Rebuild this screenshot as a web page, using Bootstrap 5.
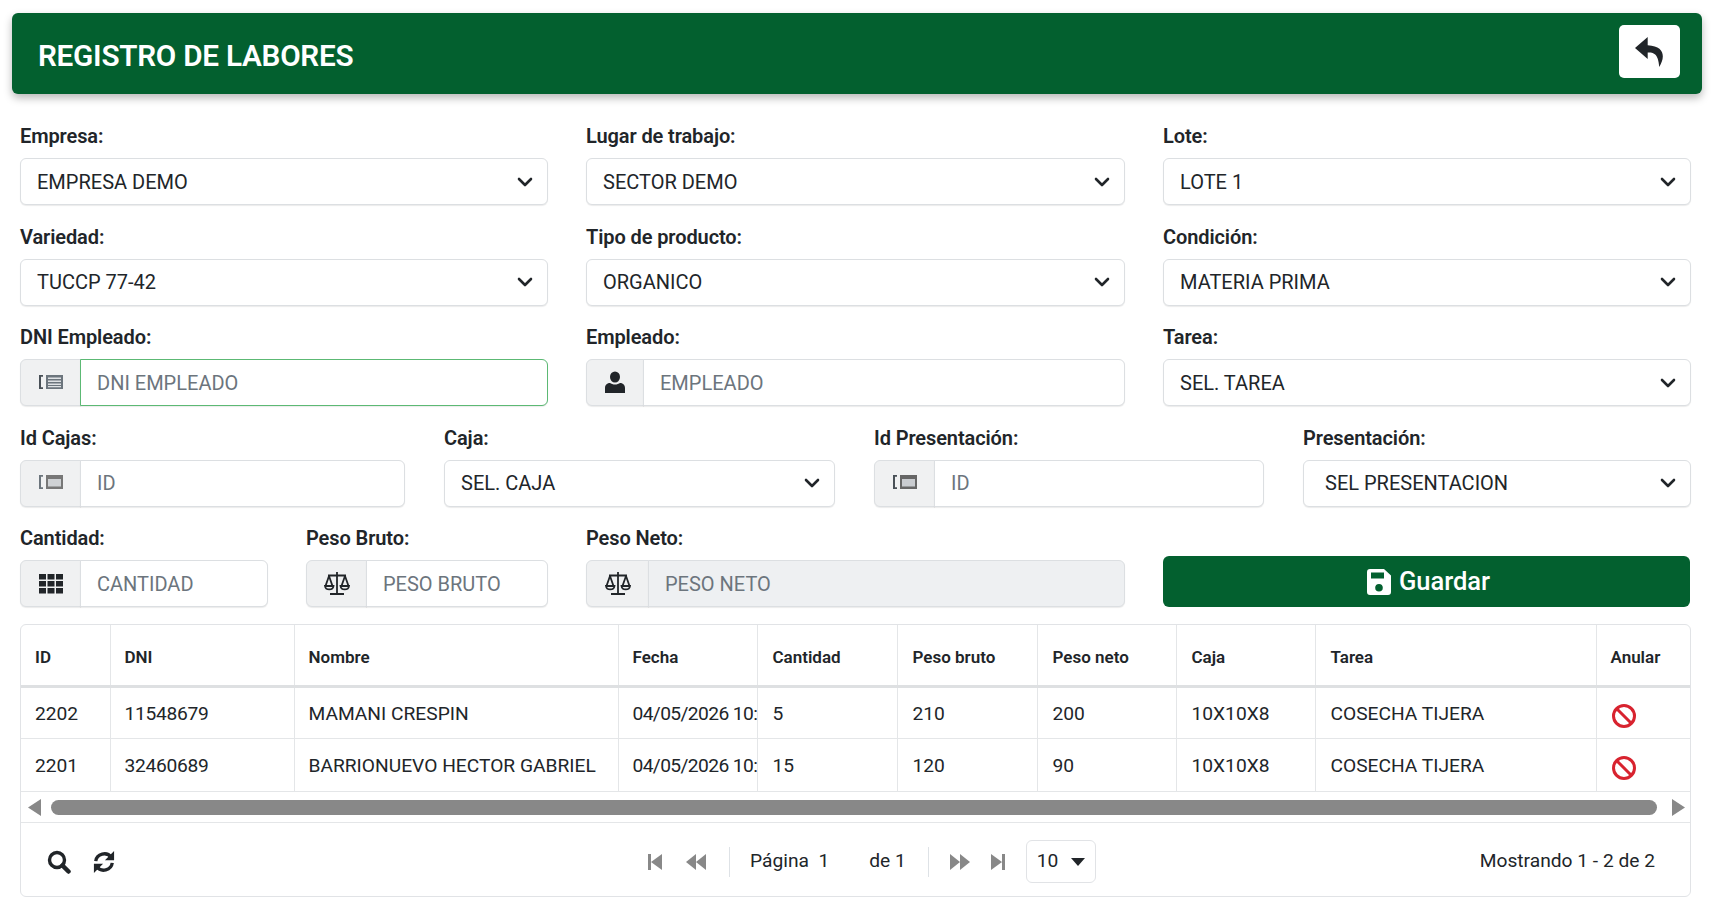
<!DOCTYPE html>
<html lang="es">
<head>
<meta charset="utf-8">
<title>Registro de labores</title>
<link href="https://cdn.jsdelivr.net/npm/bootstrap@5.3.0/dist/css/bootstrap.min.css" rel="stylesheet">
<style>
html,body{height:917px;overflow:hidden;background:#fff}
body{font-family:Roboto,"Liberation Sans",sans-serif;color:#212529;font-size:20px}
.page-wrap{padding:13px 14px 0 12px}
.top-bar{height:81px;background:#03602f;border-radius:6px;box-shadow:0 4px 8px rgba(0,0,0,.28);padding:12px 22px 16px 26px}
.top-title{font-size:29.7px;font-weight:600;color:#fff;margin:8px 0 0;line-height:1;letter-spacing:-.25px}
.back-btn{width:61px;height:53px;background:#fff;border-radius:5px;border:0;padding:0}
.form-area{padding:28px 11px 0 8px}
.f-row{display:grid;column-gap:38px;margin-bottom:17.6px}
.r3{grid-template-columns:528px 539px 1fr}
.r4{grid-template-columns:385px 391px 390px 1fr;column-gap:39px}
.r5{grid-template-columns:248px 242px 539px 1fr;margin-bottom:17px}
.f-label{display:block;font-size:20px;font-weight:600;line-height:29px;margin-bottom:7px;letter-spacing:-.1px}
.form-select,.form-control{height:47px;font-size:20px;color:#212529;border-color:#dcdfe2;border-radius:6px;box-shadow:0 1px 1px rgba(0,0,0,.08);padding-left:16px}
.form-select{background-size:20px 16px;background-position:right 12px center;background-image:url("data:image/svg+xml,%3csvg xmlns='http://www.w3.org/2000/svg' viewBox='0 0 16 16'%3e%3cpath fill='none' stroke='%23212529' stroke-linecap='round' stroke-linejoin='round' stroke-width='2.6' d='m2 5 6 6 6-6'/%3e%3c/svg%3e")}
.form-select.ps-sel{padding-left:21px}
.form-control::placeholder{color:#6c757d;opacity:1}
.form-control:disabled{background:#eef0f2}
.form-control.is-focus{border-color:#5cb974;border-width:1.5px}
.input-group-text{width:61px;height:47px;justify-content:center;background:#f0f1f2;border-color:#dcdfe2;border-radius:6px;padding:0;box-shadow:0 1px 1px rgba(0,0,0,.08)}
.input-group-text.ig-narrow{width:58px}
.input-group-text.ig-wide{width:63px}
.save-btn{height:51px;width:527px;padding:0 0 0 4px;background:#03602f;color:#fff;border:0;border-radius:6px;font-size:25.5px;font-weight:500;line-height:1;display:flex;align-items:center;justify-content:center;gap:8px;align-self:end}
.save-btn:hover{background:#03602f;color:#fff}
.grid-box{width:1671px;height:273px;border:1px solid #e1e3e6;border-radius:6px;overflow:hidden;background:#fff}
.tbl-area{height:167px;overflow:hidden}
.lab-table{width:1670px;table-layout:fixed;border-collapse:collapse;margin:0;font-size:19.2px}
.lab-table th,.lab-table td{border-right:1px solid #e4e6e8;padding:2px 0 0 14px;white-space:nowrap;overflow:hidden;vertical-align:middle}
.lab-table th:nth-child(n+5):nth-child(-n+9),.lab-table td:nth-child(n+5):nth-child(-n+9){padding-left:15px}
.lab-table th:last-child,.lab-table td:last-child{border-right:0}
.lab-table th{height:61px;padding-top:5px;font-size:17px;font-weight:600;border-bottom:3px solid #dee0e2}
.lab-table td{height:52.5px;border-bottom:1px solid #e4e6e8}
.lab-table tr.stub td{height:4px;border-bottom:0;padding:0}
.lab-table td.num-tight{letter-spacing:-.3px}
.lab-table td.date-cell{letter-spacing:-.6px}
.scroll-rail{height:31px;border-bottom:1px solid #e4e6e8;padding:0 5px 0 7px;gap:10px}
.scroll-thumb{flex:1;height:15px;background:#888;border-radius:8px;margin-right:5px}
.pager-bar{height:73px;padding:4px 35px 0 26px;font-size:19.2px}
.pager-left{width:600px;gap:22px}
.pg-first{margin-right:22px}
.pg-last{margin-left:19px}
.pg-of{margin-left:40px}
.pg-sep{width:1px;height:30px;background:#dee2e6;margin:0 20px 0 22px}
.pg-size{width:70px;height:43px;border:1px solid #e1e3e6;border-radius:6px;padding:0 10px;margin-left:20px;justify-content:space-between}
.pg-caret{width:0;height:0;border:7px solid transparent;border-top:8px solid #212529;border-bottom:0}
</style>
</head>
<body>
<div class="page-wrap">
  <div class="top-bar d-flex justify-content-between align-items-center">
    <h1 class="top-title">REGISTRO DE LABORES</h1>
    <button class="back-btn d-flex align-items-center justify-content-center" aria-label="Volver">
      <svg width="30" height="30" viewBox="0 0 26 26"><path fill="#212529" d="M11 0 0 9.500 11 19v-5.500c5 0 9 .5 10 12.500 5-8 5.500-18-10-18.800z"/></svg>
    </button>
  </div>

  <div class="form-area">
    <div class="f-row r3">
      <div><label class="f-label">Empresa:</label><select class="form-select"><option>EMPRESA DEMO</option></select></div>
      <div><label class="f-label">Lugar de trabajo:</label><select class="form-select"><option>SECTOR DEMO</option></select></div>
      <div><label class="f-label">Lote:</label><select class="form-select"><option>LOTE 1</option></select></div>
    </div>
    <div class="f-row r3">
      <div><label class="f-label">Variedad:</label><select class="form-select"><option>TUCCP 77-42</option></select></div>
      <div><label class="f-label">Tipo de producto:</label><select class="form-select"><option>ORGANICO</option></select></div>
      <div><label class="f-label">Condición:</label><select class="form-select"><option>MATERIA PRIMA</option></select></div>
    </div>
    <div class="f-row r3">
      <div><label class="f-label">DNI Empleado:</label>
        <div class="input-group"><span class="input-group-text"><svg width="26" height="20" viewBox="0 0 26 20"><path fill="#495057" d="M1 2h4v1.800H3v10.400h2V16H1z"/><path fill="#6c757d" d="M8 2h17v14H8z"/><path fill="#dfe2e5" d="M10 4.500h13V6H10zM10 7.500h13V9H10zM10 10.500h13V12H10zM10 13h13v1.200H10z"/></svg></span>
        <input class="form-control is-focus" placeholder="DNI EMPLEADO"></div></div>
      <div><label class="f-label">Empleado:</label>
        <div class="input-group"><span class="input-group-text ig-narrow"><svg width="20" height="24" viewBox="0 0 20 24"><ellipse cx="10" cy="6" rx="5" ry="5.500" fill="#212529"/><path fill="#212529" d="M0 22v-5c0-3.500 2.500-5 5-5 1 .800 3.200 1.500 5 1.500s4-.700 5-1.500c2.500 0 5 1.500 5 5v5z"/></svg></span>
        <input class="form-control" placeholder="EMPLEADO"></div></div>
      <div><label class="f-label">Tarea:</label><select class="form-select"><option>SEL. TAREA</option></select></div>
    </div>
    <div class="f-row r4">
      <div><label class="f-label">Id Cajas:</label>
        <div class="input-group"><span class="input-group-text"><svg width="26" height="20" viewBox="0 0 26 20"><path fill="#6c757d" d="M1 2h4v1.800H3v10.400h2V16H1z"/><path fill="#777" d="M8 2h17v14H8z"/><path fill="#cfd2d5" d="M10 6h13v7.500H10z"/></svg></span>
        <input class="form-control" placeholder="ID"></div></div>
      <div><label class="f-label">Caja:</label><select class="form-select"><option>SEL. CAJA</option></select></div>
      <div><label class="f-label">Id Presentación:</label>
        <div class="input-group"><span class="input-group-text"><svg width="26" height="20" viewBox="0 0 26 20"><path fill="#495057" d="M1 2h4v1.800H3v10.400h2V16H1z"/><path fill="#666" d="M8 2h17v14H8z"/><path fill="#c9ccd0" d="M10 6h13v7.500H10z"/></svg></span>
        <input class="form-control" placeholder="ID"></div></div>
      <div><label class="f-label">Presentación:</label><select class="form-select ps-sel"><option>SEL PRESENTACION</option></select></div>
    </div>
    <div class="f-row r5">
      <div><label class="f-label">Cantidad:</label>
        <div class="input-group"><span class="input-group-text"><svg width="24" height="20" viewBox="0 0 24 20"><path fill="#212529" d="M0 0h7v5.500H0zM8.500 0h7v5.500h-7zM17 0h7v5.500h-7zM0 7h7v5.500H0zM8.500 7h7v5.500h-7zM17 7h7v5.500h-7zM0 14h7v5.500H0zM8.500 14h7v5.500h-7zM17 14h7v5.500h-7z"/></svg></span>
        <input class="form-control" placeholder="CANTIDAD"></div></div>
      <div><label class="f-label">Peso Bruto:</label>
        <div class="input-group"><span class="input-group-text"><svg width="26" height="24" viewBox="0 0 26 24"><g fill="none" stroke="#212529" stroke-width="1.800"><path d="M13 0v21M6 22h14M4 3.500h18M5 4 1.500 14M5 4l3.500 10M21 4l-3.500 10M21 4l3.500 10"/><path d="M1 14c.5 4.500 8 4.500 8.500 0zM16.500 14c.5 4.500 8 4.500 8.500 0z"/></g></svg></span>
        <input class="form-control" placeholder="PESO BRUTO"></div></div>
      <div><label class="f-label">Peso Neto:</label>
        <div class="input-group"><span class="input-group-text ig-wide"><svg width="26" height="24" viewBox="0 0 26 24"><g fill="none" stroke="#212529" stroke-width="1.800"><path d="M13 0v21M6 22h14M4 3.500h18M5 4 1.500 14M5 4l3.500 10M21 4l-3.500 10M21 4l3.500 10"/><path d="M1 14c.5 4.500 8 4.500 8.500 0zM16.500 14c.5 4.500 8 4.500 8.500 0z"/></g></svg></span>
        <input class="form-control" placeholder="PESO NETO" disabled></div></div>
      <button class="btn save-btn"><svg width="24" height="26" viewBox="0 0 24 26"><path fill="#fff" fill-rule="evenodd" d="M3 0h14l7 6.500V23a3 3 0 0 1-3 3H3a3 3 0 0 1-3-3V3a3 3 0 0 1 3-3zm1 3.500v6h13v-6zM12 15a3.800 3.800 0 1 0 0 7.600 3.800 3.800 0 0 0 0-7.600z"/></svg>Guardar</button>
    </div>

    <div class="grid-box">
      <div class="tbl-area">
        <table class="lab-table">
          <colgroup><col style="width:89px"><col style="width:184px"><col style="width:324px"><col style="width:139px"><col style="width:140px"><col style="width:140px"><col style="width:139px"><col style="width:139px"><col style="width:281px"><col></colgroup>
          <thead><tr><th>ID</th><th>DNI</th><th>Nombre</th><th>Fecha</th><th>Cantidad</th><th>Peso bruto</th><th>Peso neto</th><th>Caja</th><th>Tarea</th><th>Anular</th></tr></thead>
          <tbody>
            <tr><td>2202</td><td class="num-tight">11548679</td><td>MAMANI CRESPIN</td><td class="date-cell">04/05/2026 10:</td><td>5</td><td>210</td><td>200</td><td>10X10X8</td><td>COSECHA TIJERA</td><td><svg width="26" height="26" viewBox="0 0 26 26"><circle cx="13" cy="14" r="10.500" fill="none" stroke="#d8232f" stroke-width="3"/><path stroke="#d8232f" stroke-width="3" d="m6 7 14 14"/></svg></td></tr>
            <tr><td>2201</td><td class="num-tight">32460689</td><td>BARRIONUEVO HECTOR GABRIEL</td><td class="date-cell">04/05/2026 10:</td><td>15</td><td>120</td><td>90</td><td>10X10X8</td><td>COSECHA TIJERA</td><td><svg width="26" height="26" viewBox="0 0 26 26"><circle cx="13" cy="14" r="10.500" fill="none" stroke="#d8232f" stroke-width="3"/><path stroke="#d8232f" stroke-width="3" d="m6 7 14 14"/></svg></td></tr>
            <tr class="stub"><td></td><td></td><td></td><td></td><td></td><td></td><td></td><td></td><td></td><td></td></tr>
          </tbody>
        </table>
      </div>
      <div class="scroll-rail d-flex align-items-center">
        <svg width="13" height="17" viewBox="0 0 13 17"><path fill="#888" d="M13 0v17L0 8.500z"/></svg>
        <div class="scroll-thumb"></div>
        <svg width="13" height="17" viewBox="0 0 13 17"><path fill="#888" d="M0 0v17l13-8.500z"/></svg>
      </div>
      <div class="pager-bar d-flex align-items-center">
        <div class="pager-left d-flex align-items-center">
          <svg width="24" height="24" viewBox="0 0 24 24"><circle cx="10" cy="10" r="7.500" fill="none" stroke="#212529" stroke-width="3.400"/><path stroke="#212529" stroke-width="4.500" stroke-linecap="round" d="m15.500 15.500 6 6"/></svg>
          <svg width="22" height="24" viewBox="0 0 24 24"><g fill="none" stroke="#212529" stroke-width="3.600"><path d="M3 11C4 3 15 0 20 7"/><path d="M21 13c-1 8-12 11-17 4"/></g><path fill="#212529" d="M23 0v10H13zM1 24V14h10z"/></svg>
        </div>
        <div class="d-flex align-items-center">
          <svg width="16" height="18" viewBox="0 0 16 18" class="pg-first"><path fill="#888" d="M1 1h3v16H1zM15 1v16L4 9z"/></svg>
          <svg width="22" height="16" viewBox="0 0 22 16"><path fill="#888" d="M11 0v16L1 8zM21 0v16L11 8z"/></svg>
          <span class="pg-sep"></span>
          <span>Página&nbsp; 1</span><span class="pg-of">de 1</span>
          <span class="pg-sep"></span>
          <svg width="22" height="16" viewBox="0 0 22 16"><path fill="#888" d="M1 0v16l10-8zM11 0v16l10-8z"/></svg>
          <svg width="16" height="18" viewBox="0 0 16 18" class="pg-last"><path fill="#888" d="M1 1v16l11-8zM12 1h3v16h-3z"/></svg>
          <div class="pg-size d-flex align-items-center"><span>10</span><span class="pg-caret"></span></div>
        </div>
        <div class="ms-auto">Mostrando 1 - 2 de 2</div>
      </div>
    </div>
  </div>
</div>
</body>
</html>
